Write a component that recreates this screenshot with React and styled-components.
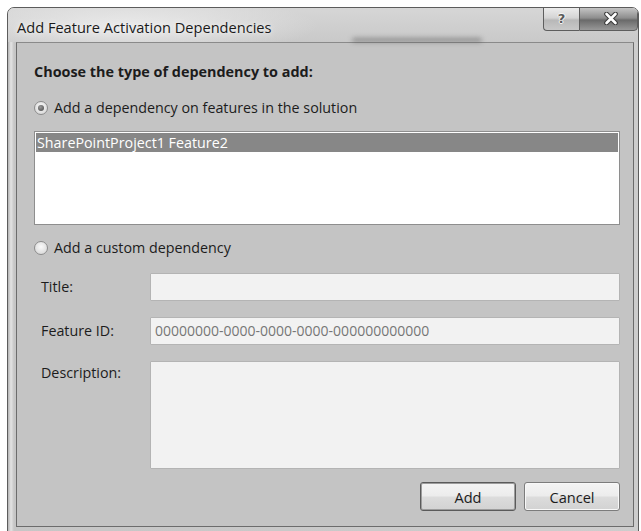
import styled, { createGlobalStyle } from "styled-components";

const GlobalStyle = createGlobalStyle`
    body {
        margin: 0;
        background: #ffffff;
        font-family: "Open Sans", "Noto Sans", sans-serif;
        font-size: 14px;
        color: #1e1e1e;
    }
`;

const App = () => {
    return (
        <Page>
            <GlobalStyle />
            <Window>
                <TitleBar>
                    <Smudge />
                    <Caption>Add Feature Activation Dependencies</Caption>
                    <CaptionButtons>
                        <HelpButton>?</HelpButton>
                        <CloseButton>
                            <svg width="14" height="13" viewBox="0 0 14 13">
                                <path d="M2.5 2 L11.5 11 M11.5 2 L2.5 11" stroke="#3a3a3a" strokeWidth="4.6" strokeLinecap="round" />
                                <path d="M2.5 2 L11.5 11 M11.5 2 L2.5 11" stroke="#ffffff" strokeWidth="2.6" strokeLinecap="round" />
                            </svg>
                        </CloseButton>
                    </CaptionButtons>
                </TitleBar>
                <Body>
                    <Content>
                        <Heading>Choose the type of dependency to add:</Heading>
                        <RadioRow>
                            <Radio $checked />
                            <span>Add a dependency on features in the solution</span>
                        </RadioRow>
                        <ListBox>
                            <ListItem $selected>SharePointProject1 Feature2</ListItem>
                        </ListBox>
                        <RadioRow $gap={14}>
                            <Radio />
                            <span>Add a custom dependency</span>
                        </RadioRow>
                        <FieldRow>
                            <Label>Title:</Label>
                            <Input />
                        </FieldRow>
                        <FieldRow>
                            <Label>Feature ID:</Label>
                            <Input>00000000-0000-0000-0000-000000000000</Input>
                        </FieldRow>
                        <FieldRow $top>
                            <Label $top>Description:</Label>
                            <Input $tall />
                        </FieldRow>
                        <ButtonRow>
                            <Button $default>Add</Button>
                            <Button>Cancel</Button>
                        </ButtonRow>
                    </Content>
                </Body>
            </Window>
        </Page>
    );
};

const Page = styled.div`
    width: 641px;
    height: 531px;
    padding: 7px 2px 0 7px;
    box-sizing: border-box;
`;

const Window = styled.div`
    height: 523px;
    display: flex;
    flex-direction: column;
    border: 1px solid #5c5c5c;
    border-radius: 7px 7px 0 0;
    background: linear-gradient(90deg, #b4b4b4 0, #e4e4e4 3px, #c6c6c6 6px, #cdcdcd 100%);
    overflow: hidden;
`;

const TitleBar = styled.div`
    position: relative;
    height: 34px;
    display: flex;
    align-items: flex-start;
    background:
        radial-gradient(ellipse 190px 30px at 120px 18px, rgba(238, 238, 238, 0.9), rgba(238, 238, 238, 0) 100%),
        linear-gradient(180deg, #d6d6d6 0, #c9c9c9 100%);
`;

/* blurred glass reflection behind the title bar */
const Smudge = styled.div`
    position: absolute;
    left: 344px;
    top: 30px;
    width: 130px;
    height: 4px;
    border-radius: 3px;
    background: rgba(60, 60, 60, 0.45);
    filter: blur(2.5px);
`;

const Caption = styled.div`
    position: relative;
    padding: 9px 0 0 9px;
    font-size: 14.6px;
    line-height: 20px;
    color: #1a1a1a;
    text-shadow: 0 0 6px #f0f0f0, 0 0 3px #f0f0f0;
`;

const CaptionButtons = styled.div`
    display: flex;
    margin-left: auto;
    margin-top: -1px;
`;

const CaptionButton = styled.div`
    height: 24px;
    display: flex;
    align-items: center;
    justify-content: center;
    border: 1px solid #5e5e5e;
    box-sizing: border-box;
`;

const HelpButton = styled(CaptionButton)`
    width: 36px;
    border-radius: 0 0 0 4px;
    border-right: none;
    padding-bottom: 2px;
    font-family: "DejaVu Sans", sans-serif;
    font-weight: bold;
    font-size: 13px;
    color: #5a5a5a;
    text-shadow: 0 1px 0 #f4f4f4, 0 -1px 0 #f4f4f4, 1px 0 0 #f4f4f4, -1px 0 0 #f4f4f4;
    background: linear-gradient(180deg, #ececec 0, #d4d4d4 45%, #b8b8b8 55%, #c8c8c8 100%);
`;

const CloseButton = styled(CaptionButton)`
    width: 59px;
    border-radius: 0 0 4px 0;
    padding: 0 0 2px 4px;
    background: linear-gradient(180deg, #c4c4c4 0, #8e8e8e 45%, #6a6a6a 55%, #989898 100%);
`;

const Body = styled.div`
    flex: 1;
    display: flex;
    padding: 0 4px 4px 8px;
`;

const Content = styled.div`
    flex: 1;
    display: flex;
    flex-direction: column;
    padding: 20px 13px 0 17px;
    background: #c4c4c4;
    border: 1px solid #6c6c6c;
    border-top-color: #8a8a8a;
    font-size: 14.3px;
    line-height: 18px;
`;

const Heading = styled.div`
    font-weight: bold;
    font-size: 14.4px;
    color: #1c1c1c;
`;

const RadioRow = styled.div`
    display: flex;
    align-items: center;
    gap: 6px;
    margin-top: ${({ $gap }) => $gap ?? 18}px;
    color: #1c1c1c;
`;

const Radio = styled.span`
    width: 14px;
    height: 14px;
    border-radius: 50%;
    box-sizing: border-box;
    border: 1px solid #8c8c8c;
    background: radial-gradient(circle at 50% 40%, #fafafa 0, #dedede 70%, #cfcfcf 100%);
    display: flex;
    align-items: center;
    justify-content: center;
    &::after {
        content: "";
        width: 6px;
        height: 6px;
        border-radius: 50%;
        display: ${({ $checked }) => ($checked ? "block" : "none")};
        background: radial-gradient(circle at 40% 35%, #9a9a9a 0, #4e4e4e 90%);
    }
`;

const ListBox = styled.div`
    margin-top: 14px;
    height: 94px;
    box-sizing: border-box;
    border: 1px solid #8e8e8e;
    background: #ffffff;
    padding: 1px;
`;

const ListItem = styled.div`
    height: 19px;
    padding-left: 1px;
    line-height: 19px;
    background: ${({ $selected }) => ($selected ? "#878787" : "transparent")};
    color: ${({ $selected }) => ($selected ? "#ffffff" : "#1c1c1c")};
`;

const FieldRow = styled.div`
    display: flex;
    align-items: ${({ $top }) => ($top ? "flex-start" : "center")};
    margin-top: 16px;
`;

const Label = styled.div`
    width: 116px;
    flex: none;
    padding-left: 7px;
    box-sizing: border-box;
    margin-top: ${({ $top }) => ($top ? "3px" : "0")};
    color: #1c1c1c;
`;

const Input = styled.div`
    flex: 1;
    height: ${({ $tall }) => ($tall ? 108 : 28)}px;
    box-sizing: border-box;
    border: 1px solid #b4b4b4;
    border-radius: 1px;
    background: #f2f2f2;
    padding: 4px 4px;
    color: #767676;
    font-size: 14px;
`;

const ButtonRow = styled.div`
    display: flex;
    justify-content: flex-end;
    gap: 8px;
    margin-top: 13px;
`;

const Button = styled.div`
    width: 96px;
    height: 29px;
    box-sizing: border-box;
    display: flex;
    align-items: center;
    justify-content: center;
    border: 1px solid ${({ $default }) => ($default ? "#5a5a5a" : "#7c7c7c")};
    border-radius: 3px;
    background: linear-gradient(180deg, #f4f4f4 0, #ececec 48%, #dcdcdc 52%, #d2d2d2 100%);
    box-shadow: inset 0 0 0 1px ${({ $default }) => ($default ? "#9c9c9c" : "#f8f8f8")};
    color: #1c1c1c;
    font-size: 14.6px;
`;

export default App;
